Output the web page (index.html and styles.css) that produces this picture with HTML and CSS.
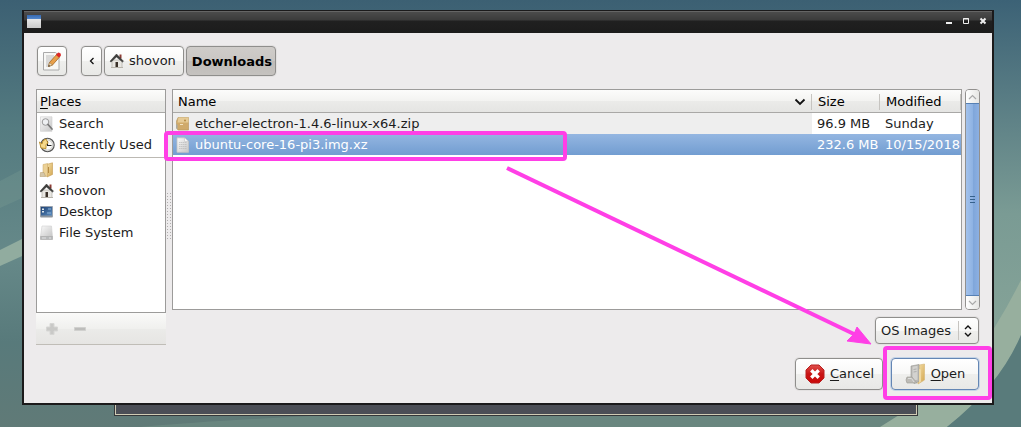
FILE: index.html
```html
<!DOCTYPE html>
<html lang="en">
<head>
<meta charset="utf-8">
<meta name="viewport" content="width=device-width, initial-scale=1">
<title>Open file</title>
<link rel="stylesheet" href="styles.css">
</head>
<body>
<svg class="defs" aria-hidden="true">
  <defs>
    <linearGradient id="folderFill" x1="0" x2="1" y1="0" y2="1"><stop offset="0" stop-color="#f6e3ae"/><stop offset="1" stop-color="#d3a650"/></linearGradient>
    <linearGradient id="paperFill" x1="0" x2="1" y1="0" y2="1"><stop offset="0" stop-color="#fafafa"/><stop offset="1" stop-color="#c6c6c6"/></linearGradient>
    <linearGradient id="screenFill" x1="0" x2="1" y1="0" y2="1"><stop offset="0" stop-color="#1d3f70"/><stop offset="1" stop-color="#5d90c4"/></linearGradient>
    <linearGradient id="stopFill" x1="0" x2="0" y1="0" y2="1"><stop offset="0" stop-color="#e0504c"/><stop offset="0.5" stop-color="#c81414"/><stop offset="1" stop-color="#cc0a0a"/></linearGradient>
    <symbol id="home" viewBox="0 0 16 16">
      <path d="M3 7h10v7.500H3z" fill="#e9e7e2" stroke="#aaa69e" stroke-width=".6"/>
      <path d="M10.500 1.500h2v4h-2z" fill="#8d3c34"/>
      <path d="M7.500 1 1 8.200l1 .9L7.500 4l6 5.100 1-.9z" fill="#3e3e3c" stroke="#2a2a28" stroke-width=".5"/>
      <path d="M6.500 9h2.500v5.500H6.500z" fill="#3a3028"/>
      <path d="M2 14.500h12" stroke="#b7b3aa"/>
    </symbol>
    <symbol id="folder" viewBox="0 0 16 16">
      <path d="M7.500 2.500 13.500.8V12.500L8 15z" fill="url(#folderFill)" stroke="#c49b50" stroke-width=".6"/>
      <path d="M4 2.500 8.500 1.500v13L4 13.500z" fill="#ecd196" stroke="#c9a763" stroke-width=".5"/>
      <path d="M1.500 10.500H5l1.500 4H1z" fill="#d4c6a8" stroke="#b49a68" stroke-width=".5"/>
      <path d="M9.500 5v6" stroke="#a87a30" stroke-width=".8"/>
    </symbol>
    <symbol id="page" viewBox="0 0 16 16">
      <path d="M2 .8h7.500l4 3.500v11H2z" fill="url(#paperFill)" stroke="#c3c3c0" stroke-width=".8"/>
      <path d="M9.500 .8v3.500h4z" fill="#fff" stroke="#bbb" stroke-width=".5"/>
      <path d="M4 5.500h7.500M4 7.500h7.500M4 9.500h7.500M4 11.500h7.500" stroke="#b9b9b9" stroke-width=".7" stroke-dasharray="1.500 .5"/>
    </symbol>
  </defs>
</svg>

<svg class="wallpaper" viewBox="0 0 1021 427" preserveAspectRatio="none" aria-hidden="true">
  <defs>
    <linearGradient id="wall" x1="0" x2="0" y1="0" y2="1"><stop offset="0" stop-color="#3c6073"/><stop offset=".3" stop-color="#547b80"/><stop offset=".6" stop-color="#668989"/><stop offset=".8" stop-color="#587a7b"/><stop offset="1" stop-color="#607a77"/></linearGradient>
    <linearGradient id="wallRight" x1="0" x2="0" y1="0" y2="1"><stop offset="0" stop-color="#3c6276"/><stop offset=".5" stop-color="#7a9b94"/><stop offset=".75" stop-color="#84a297"/><stop offset="1" stop-color="#6d8f86"/></linearGradient>
  </defs>
  <path fill="url(#wall)" d="M0 0h1021v427H0z"/>
  <path fill="url(#wallRight)" d="M940 0h81v427h-81z"/>
  <path fill="#7d9e95" opacity=".3" d="M0 181 40 160v30L0 208z"/>
  <path fill="#91ac9f" d="M0 250 40 230v18L0 266z"/>
  <path fill="#6f8d86" d="M140 427q180-16 560-22h260v22z" opacity=".6"/>
  <path fill="#97af9e" d="M1021 280Q1008 306 993 330 950 385 880 427h67Q1000 385 1021 335z"/>
  <path fill="#597b7b" d="M1021 335Q1000 385 947 427h74z"/>
</svg>

<div class="desktop">
  <main class="dialog">
    <header class="titlebar">
      <span class="app-icon"></span>
      <div class="window-controls">
        <button type="button" aria-label="Minimize"><svg width="8" height="8" viewBox="0 0 8 8"><path d="M1 6h6" stroke="#eee" stroke-width="2"/></svg></button>
        <button type="button" aria-label="Maximize"><svg width="8" height="8" viewBox="0 0 8 8"><path d="M1.500 1.500h5v5h-5zM1 2h6" fill="none" stroke="#eee"/></svg></button>
        <button type="button" aria-label="Close"><svg width="8" height="8" viewBox="0 0 8 8"><path d="m1.500 1.500 5 5m0-5-5 5" stroke="#eee" stroke-width="2"/></svg></button>
      </div>
    </header>

    <div class="content">
      <nav class="toolbar" aria-label="Path">
        <button class="button edit" type="button" aria-label="Type a file name">
          <svg width="20" height="20" viewBox="0 0 20 20"><path d="M1.500 1.500h12l3.500 3v14.500H1.500z" fill="#f7f7f5" stroke="#aaa"/><path d="M4 5h8M4 7h8M4 9h7M4 11h6M4 13h4M4 15h4" stroke="#bbb"/><path d="m6.500 15.500 1-4L15 3l3 2.500-7.500 8.500z" fill="#e8a04a" stroke="#9a5a16" stroke-width=".7"/><path d="m6.500 15.500 1-4 3 2.500z" fill="#efd9b0" stroke="#8c6a3c" stroke-width=".5"/><path d="m6.500 15.500.4-1.600 1.200 1z" fill="#222"/><path d="m14 4 1.600-2q1-1 2.400.2t.8 2.300L17 6.500z" fill="#dc2626"/></svg>
        </button>
        <div class="path">
          <button class="button back" type="button" aria-label="Scroll path back"><svg width="6" height="8" viewBox="0 0 6 8"><path d="M4.500 1 1.500 4l3 3" fill="none" stroke="#111" stroke-width="1.300"/></svg></button>
          <button class="button crumb" type="button"><svg width="16" height="16"><use href="#home"/></svg>shovon</button>
          <button class="button crumb current" type="button" aria-pressed="true">Downloads</button>
        </div>
      </nav>

      <div class="panes">
        <aside class="sidebar">
          <section class="places">
            <h2 class="heading"><u>P</u>laces</h2>
            <ul class="place-list">
              <li><svg width="16" height="16" viewBox="0 0 16 16"><path d="M1.500.8h11.500v14.500H1.500z" fill="url(#paperFill)" stroke="#d2d2d2" stroke-width=".7"/><circle cx="6.500" cy="6" r="3.300" fill="#eef0f2" stroke="#999" stroke-width="1"/><path d="m9 8.500 4 4.500" stroke="#777" stroke-width="1.700" stroke-linecap="round"/></svg>Search</li>
              <li><svg width="16" height="16" viewBox="0 0 16 16"><circle cx="8.500" cy="8" r="6.700" fill="#e9e9e4" stroke="#555" stroke-width="1.100"/><circle cx="8.500" cy="8" r="5" fill="#fbfbf8" stroke="#aaa" stroke-width=".5"/><path d="M8.500 4v4.500h4" fill="none" stroke="#222" stroke-width="1.100"/><path d="M.5 5 3 7q0-4 4-5l2 4-2 1.500v4L2 11z" fill="#f5d98c" stroke="#b98a25" stroke-width=".9"/></svg>Recently Used</li>
            </ul>
            <ul class="place-list bookmarks">
              <li><svg width="16" height="16"><use href="#folder"/></svg>usr</li>
              <li><svg width="16" height="16"><use href="#home"/></svg>shovon</li>
              <li><svg width="16" height="16" viewBox="0 0 16 16"><path d="M1.500 2.500h12v10h-12z" fill="url(#screenFill)" stroke="#9aa0a6" stroke-width=".8"/><path d="M3 4.500h2v1.500H3zM3 7h2v1.500H3z" fill="#dfe8ee"/><path d="M9 5h3M8 9h4" stroke="#8fb6da"/><path d="M1.500 11.500h12v2h-12z" fill="#8c949c"/></svg>Desktop</li>
              <li><svg width="16" height="16" viewBox="0 0 16 16"><path d="M3 1h9.500l1 10.500H1.500z" fill="url(#paperFill)" stroke="#d0d0d0" stroke-width=".6"/><path d="M1.500 11.500h12v3h-12z" fill="#b8babb" stroke="#a5a5a5" stroke-width=".6"/><path d="M3 13h4M10 13h2" stroke="#eee" stroke-width=".8"/></svg>File System</li>
            </ul>
          </section>
          <div class="place-actions">
            <button type="button" aria-label="Add" disabled><svg width="12" height="12" viewBox="0 0 12 12"><path d="M4 .5h4V4h3.500v4H8v3.500H4V8H.5V4H4z" fill="#c9c9c7" stroke="#d6d6d4"/></svg></button>
            <button type="button" aria-label="Remove" disabled><svg width="12" height="12" viewBox="0 0 12 12"><path d="M.5 4.500h11v3H.5z" fill="#bdbdbb" stroke="#d0d0ce"/></svg></button>
          </div>
        </aside>

        <div class="splitter"><span class="grip"></span></div>

        <section class="files">
          <div class="file-view">
            <div class="file-frame">
              <table class="file-table">
                <colgroup><col><col class="col-size"><col class="col-modified"></colgroup>
                <thead>
                  <tr>
                    <th scope="col" aria-sort="ascending"><div class="th-inner">Name<svg width="12" height="8" viewBox="0 0 12 8"><path d="m1.500 1.500 4.500 4.500 4.500-4.500" fill="none" stroke="#111" stroke-width="1.800"/></svg></div></th>
                    <th scope="col"><div class="th-inner">Size</div></th>
                    <th scope="col"><div class="th-inner">Modified</div></th>
                  </tr>
                </thead>
                <tbody>
                  <tr>
                    <td class="sorted"><div class="file-name"><svg width="16" height="16" viewBox="0 0 16 16"><path d="M3 1.500h10.500v12.500H3L1.500 12V5z" fill="#d0aa6a" stroke="#b3935a" stroke-width=".6"/><path d="M3.500 1.500h10V6.500H2.500z" fill="#e6cb96"/><path d="M1 8.500h1.500v4.500L1 12z" fill="#a9a9a4"/><path d="M5 8.500h3" stroke="#f3e4c4"/><circle cx="10" cy="4.500" r="1" fill="#b38a44"/></svg>etcher-electron-1.4.6-linux-x64.zip</div></td>
                    <td>96.9 MB</td>
                    <td>Sunday</td>
                  </tr>
                  <tr class="selected" aria-selected="true">
                    <td><div class="file-name"><svg width="16" height="16"><use href="#page"/></svg>ubuntu-core-16-pi3.img.xz</div></td>
                    <td>232.6 MB</td>
                    <td>10/15/2018</td>
                  </tr>
                </tbody>
              </table>
              <span class="mark mark-file"></span>
            </div>
            <div class="scrollbar">
              <button type="button" aria-label="Scroll up"><svg width="9" height="6" viewBox="0 0 9 6"><path d="m1 5 3.500-3.500L8 5" fill="none" stroke="#aaa" stroke-width="1.200"/></svg></button>
              <div class="thumb"><svg width="5" height="8" viewBox="0 0 5 8"><path d="M0 .5h5M0 3.500h5M0 6.500h5" stroke="#36618c"/></svg></div>
              <button type="button" aria-label="Scroll down"><svg width="9" height="6" viewBox="0 0 9 6"><path d="m1 1 3.500 3.500L8 1" fill="none" stroke="#aaa" stroke-width="1.200"/></svg></button>
            </div>
          </div>
          <div class="filter">
            <select class="button" aria-label="File type"><option>OS Images</option></select>
            <span class="filter-arrows"><svg width="8" height="12" viewBox="0 0 8 12"><path d="m1 4 3-3 3 3M1 8l3 3 3-3" fill="none" stroke="#111" stroke-width="1.400"/></svg></span>
          </div>
        </section>
      </div>

      <footer class="actions">
        <button class="button action" type="button"><svg width="22" height="22" viewBox="0 0 22 22"><path d="M7 2h8l5 5v8l-5 5H7l-5-5V7z" fill="url(#stopFill)" stroke="#b82020" stroke-linejoin="round"/><path d="m7.300 7.300 7.400 7.400m0-7.400-7.400 7.400" stroke="#fff" stroke-width="3.400"/></svg><span><u>C</u>ancel</span></button>
        <div class="marked">
          <button class="button action default" type="button"><svg width="22" height="22" viewBox="0 0 22 22"><path d="m12 2.500 7.500-1.500v16L13 21z" fill="url(#folderFill)" stroke="#d9ba7c" stroke-width=".7"/><path d="m6 3 8-1.500v17l-5 2-3-4z" fill="#b9b8b4" stroke="#999894" stroke-width=".6"/><path d="m7.500 3.800 5-1v14l-5 1z" fill="#d3d2cf"/><path d="M8.500 6.500 11.500 6M8.500 9l3-.5" stroke="#a5a5a3" stroke-width=".8"/><path d="M14 6v14l2-1.500V6.500z" fill="#f0d9a4"/><path d="M2 14h5l5 6H2q-2-3 0-6z" fill="#bdbbb6" stroke="#9c9a96" stroke-width=".6"/><path d="M3 15.500h3.500l2.500 3.500" fill="none" stroke="#ddd"/></svg><span><u>O</u>pen</span></button>
          <span class="mark mark-open"></span>
        </div>
      </footer>
    </div>

    <svg class="pointer" width="368" height="182" viewBox="0 0 368 182" aria-hidden="true"><path d="M3 2 352 169" stroke="#ff3fe6" stroke-width="4"/><path d="M367 178 353 161 350 168 343 175z" fill="#ff3fe6" stroke="#ff3fe6" stroke-width="1"/></svg>
  </main>
  <div class="window-behind"></div>
</div>
</body>
</html>
```

FILE: styles.css
```css
* { box-sizing: border-box; }

body {
  margin: 0;
  background: #5f8082;
  color: #1c1c1c;
  font: 13px/20px "DejaVu Sans", sans-serif;
}

button, select { font: inherit; color: inherit; margin: 0; }
svg { display: block; flex: none; }
u { text-underline-offset: 2px; }

.defs { position: absolute; width: 0; height: 0; }
.wallpaper { position: fixed; inset: 0; width: 100%; height: 100%; }

.desktop {
  position: relative;
  display: flex;
  flex-direction: column;
  min-height: 100vh;
  padding: 10px 27px 11px 22px;
}

.dialog {
  position: relative;
  flex: 1;
  display: flex;
  flex-direction: column;
  border: 2px solid #1b1a1b;
  border-top-width: 1px;
  background: #edebec;
}

.window-behind {
  position: relative;
  height: 11px;
  margin: 0 76px 0 92px;
  border: 1px solid #35373a;
  border-top: 0;
  background: #4b4e56;
  box-shadow: inset 1px -1px #d0cbb4, inset -1px 0 #d0cbb4;
}

.titlebar {
  display: flex;
  align-items: center;
  justify-content: space-between;
  height: 22px;
  padding: 0 5px 2px 3px;
  background: linear-gradient(#4d4d4d, #3b3b3b 9px, #202020 10px, #1c1c1c);
  box-shadow: inset 0 1px #656565;
}

.app-icon {
  width: 14px;
  height: 13px;
  background: linear-gradient(#3769af, #5488cd 4px, #e8e8e8 4px, #cacaca);
}

.window-controls { display: flex; gap: 9px; }
.window-controls button { padding: 0; border: 0; background: none; }

.content {
  flex: 1;
  display: flex;
  flex-direction: column;
  gap: 13px;
  padding: 13px 12px;
}

.button {
  display: flex;
  align-items: center;
  justify-content: center;
  height: 30px;
  padding: 0 5px;
  border: 1px solid #8f8e8c;
  border-radius: 4px;
  background: linear-gradient(#fff, #f8f8f7 50%, #efefed 51%, #e8e8e6);
  box-shadow: 0 0 0 1px #e3e1e1;
}

.toolbar { display: flex; gap: 14px; padding-left: 1px; }
.path { display: flex; gap: 2px; }
.edit { width: 30px; }
.back { width: 21px; }
.crumb { gap: 4px; padding: 0 7px 0 4px; }
.current {
  padding: 2px 3px 0 5px;
  background: linear-gradient(#cfccc9, #c9c6c3 50%, #bebbb8 51%, #c5c2bf);
  color: #000;
  font-weight: bold;
}

.panes { flex: 1; display: flex; }

.sidebar { display: flex; flex-direction: column; width: 130px; }
.places { flex: 1; border: 1px solid #9c9b9a; background: #fff; }

.heading {
  height: 23px;
  margin: 0;
  padding: 2px 3px 0;
  border-bottom: 1px solid #a9a8a6;
  background: linear-gradient(#fcfcfb, #f3f3f1 50%, #ebebe9 51%, #e5e5e3);
  color: #000;
  font: inherit;
}

.place-list { margin: 0; padding: 0; list-style: none; }
.place-list li {
  display: flex;
  align-items: center;
  gap: 4px;
  height: 21px;
  padding-left: 2px;
  white-space: nowrap;
}
.bookmarks { margin-top: 2px; padding-top: 1px; border-top: 1px solid #bcb9b3; }

.place-actions {
  display: flex;
  align-items: center;
  gap: 16px;
  height: 32px;
  padding-left: 10px;
  border-bottom: 1px solid #c0bdb7;
  background: linear-gradient(#fafaf9, #f0f0ee 50%, #ebebe9 51%, #e6e5e3);
}
.place-actions button { padding: 0; border: 0; background: none; }

.splitter { display: flex; align-items: center; width: 6px; padding: 1px; }
.grip {
  width: 5px;
  height: 48px;
  background: linear-gradient(#b5b3b3, #b5b3b3) 0 0 / 1px 1px;
  background: conic-gradient(from 270deg at 1px 1px, #b0aeae 90deg, transparent 0) 0 0 / 3px 3px;
}

.files { flex: 1; display: flex; flex-direction: column; gap: 7px; min-width: 0; }
.file-view { flex: 1; display: flex; gap: 3px; }
.file-frame { position: relative; flex: 1; border: 1px solid #9c9b9a; background: #fff; }

.file-table { width: 100%; border-collapse: separate; border-spacing: 0; table-layout: fixed; }
.col-size { width: 68px; }
.col-modified { width: 81px; }
.file-table th {
  height: 23px;
  padding: 2px 0 0;
  border-bottom: 1px solid #a9a8a6;
  background: linear-gradient(#fcfcfb, #f3f3f1 50%, #ebebe9 51%, #e5e5e3);
  color: #000;
  font-weight: normal;
  text-align: left;
}
.th-inner {
  display: flex;
  align-items: center;
  justify-content: space-between;
  height: 16px;
  padding: 0 5px;
  border-right: 1px solid #c6c4c0;
}
.file-table th + th .th-inner { padding-left: 6px; }
.file-table td { height: 21px; padding: 0 0 0 5px; line-height: 21px; white-space: nowrap; }
.file-name { display: flex; align-items: center; gap: 4px; height: 21px; }
.file-table td:first-child { padding-left: 2px; }
.file-table .sorted { background: #eeeeee; }
.selected { background: linear-gradient(#94b6e1, #729dd1); color: #fff; }

.scrollbar {
  display: flex;
  flex-direction: column;
  width: 15px;
  border: 1px solid #92908e;
  border-radius: 4px;
  overflow: hidden;
}
.scrollbar button {
  display: flex;
  align-items: center;
  justify-content: center;
  height: 13px;
  padding: 0;
  border: 0;
  background: linear-gradient(90deg, #fff, #e6e6e4);
}
.thumb {
  flex: 1;
  display: flex;
  align-items: center;
  justify-content: center;
  border: solid #5680b4;
  border-width: 1px 0;
  background: linear-gradient(90deg, #a3c2ec, #8fb3e3 50%, #7fa6da 55%, #8cb0e2);
}

.filter { position: relative; align-self: flex-end; margin-bottom: 1px; margin-right: 1px; }
.filter select { appearance: none; width: 104px; height: 27px; padding: 0 22px 0 5px; }
.filter-arrows {
  position: absolute;
  inset: 4px 7px 4px auto;
  display: flex;
  align-items: center;
  padding-left: 5px;
  border-left: 1px solid #c6c4c0;
  pointer-events: none;
}

.actions { display: flex; justify-content: flex-end; gap: 8px; padding-right: 1px; }
.action { width: 88px; height: 32px; gap: 4px; }
.default { border-color: #6486b4; box-shadow: 0 0 0 1px #c5d4e6; }
.marked { position: relative; }

.mark { position: absolute; border: 4px solid #ff3fe6; border-radius: 4px; pointer-events: none; }
.mark-file { left: -9px; top: 41px; width: 403px; height: 30px; }
.mark-open { inset: -12px -13px -10px -8px; }

.pointer { position: absolute; right: 120px; bottom: 55px; pointer-events: none; }
```
